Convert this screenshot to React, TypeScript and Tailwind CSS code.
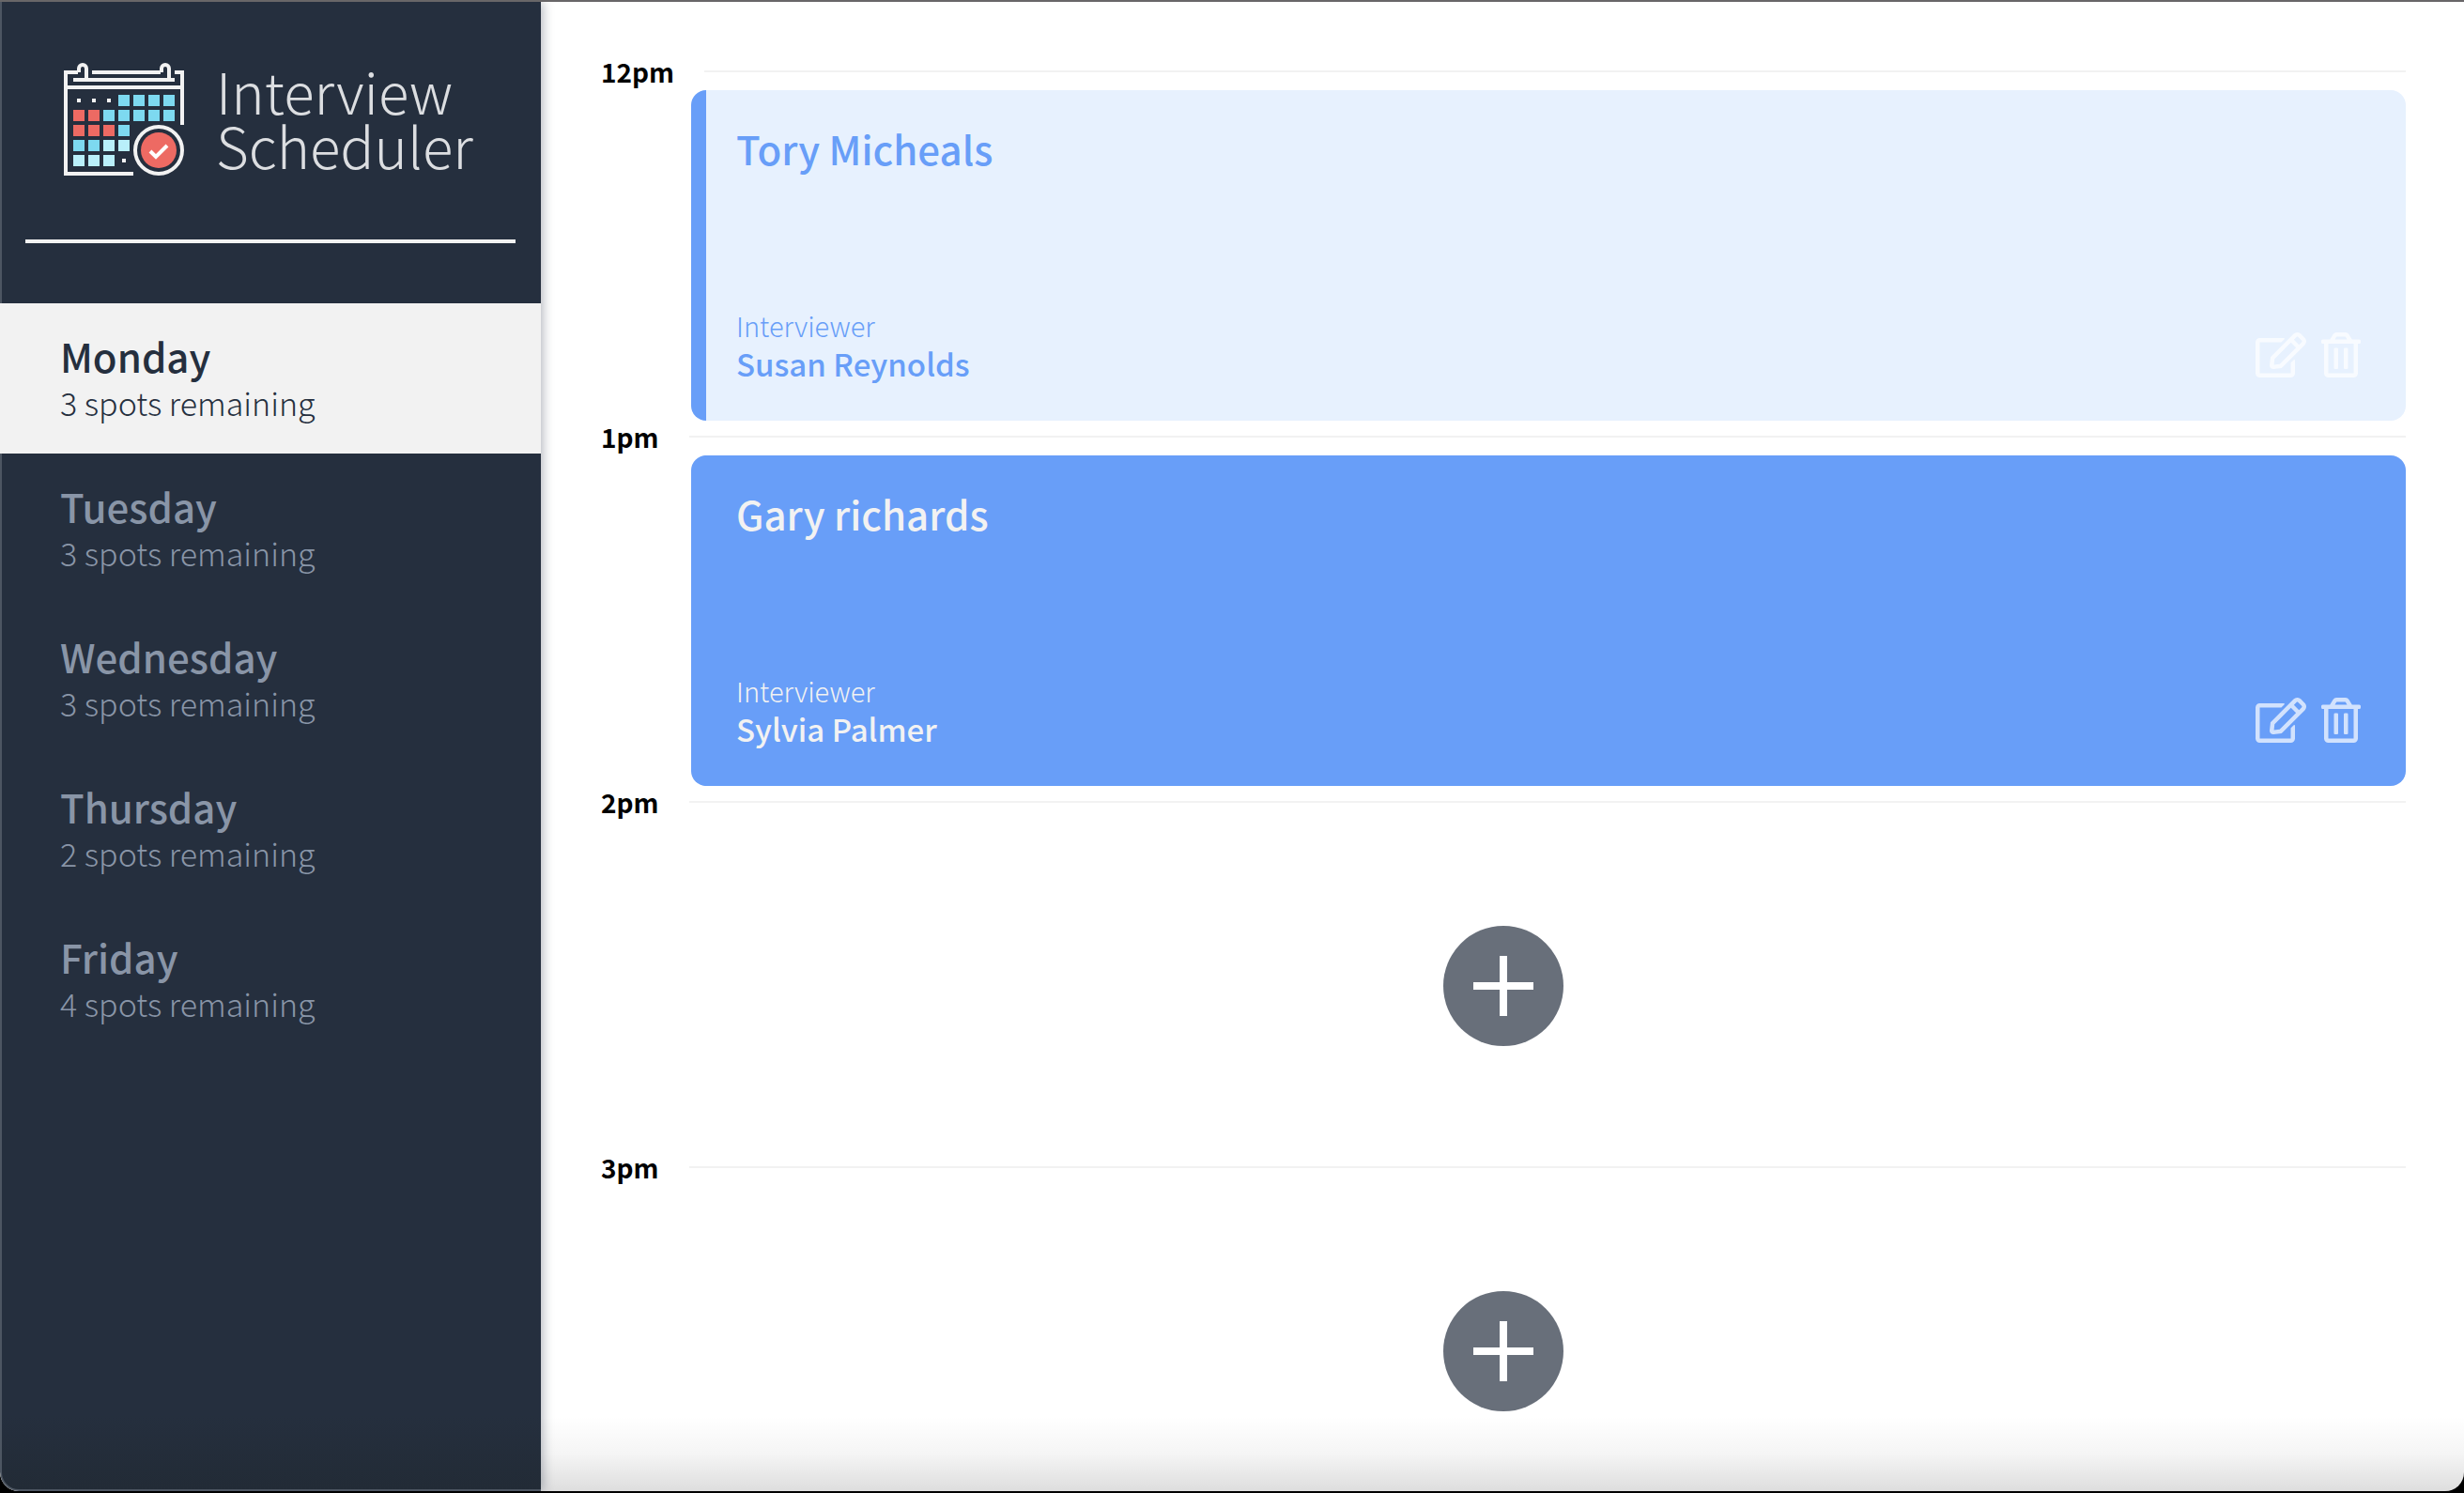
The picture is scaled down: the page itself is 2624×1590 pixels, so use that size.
import { useState } from "react";
import { FaRegEdit, FaRegTrashAlt } from "react-icons/fa";

const days = [
  { name: "Monday", spots: 3 },
  { name: "Tuesday", spots: 3 },
  { name: "Wednesday", spots: 3 },
  { name: "Thursday", spots: 2 },
  { name: "Friday", spots: 4 },
];

type Slot = { time: string; student?: string; interviewer?: string };

const slots: Slot[] = [
  { time: "12pm", student: "Tory Micheals", interviewer: "Susan Reynolds" },
  { time: "1pm", student: "Gary richards", interviewer: "Sylvia Palmer" },
  { time: "2pm" },
  { time: "3pm" },
];

const RED = "#ed6a63";
const BLUE = "#7dd9f0";
const PALE = "#b9effa";

const cells = [
  [null, null, null, BLUE, BLUE, BLUE, BLUE],
  [RED, RED, BLUE, BLUE, BLUE, BLUE, BLUE],
  [RED, RED, RED, BLUE],
  [BLUE, BLUE, PALE, PALE],
  [PALE, PALE, PALE, null],
];

function CalendarLogo() {
  return (
    <svg viewBox="0 0 128 120" className="h-[120px] w-32 shrink-0" fill="none" aria-hidden="true">
      <g stroke="#f2f2f2" strokeWidth="4">
        <path d="M15 10H2V118H74" />
        <path d="M30 10H103" />
        <path d="M118 10H126V66" />
        <path d="M10 18H118" />
        <path d="M2 26H126" />
        <path d="M16 10V6a4 4 0 0 1 8 0V17" />
        <path d="M104 10V6a4 4 0 0 1 8 0V17" />
        <circle cx="101" cy="93" r="25" />
      </g>
      {cells.map((row, r) =>
        row.map((fill, c) =>
          fill ? (
            <rect key={`${r}-${c}`} x={10 + c * 16} y={34 + r * 16} width="12" height="12" fill={fill} />
          ) : (
            <rect key={`${r}-${c}`} x={14 + c * 16} y={38 + r * 16} width="4" height="4" fill="#f2f2f2" />
          ),
        ),
      )}
      <circle cx="101" cy="93" r="19" fill={RED} />
      <path d="M92 94l6 6 12-12" stroke="#fff" strokeWidth="4" />
    </svg>
  );
}

function Sidebar() {
  const [selected, setSelected] = useState("Monday");
  return (
    <aside className="z-10 flex w-[576px] shrink-0 flex-col rounded-bl-[20px] border-b-2 border-l-2 border-[#4d5662] bg-gradient-to-b from-[#252f3e] from-95% to-[#222b36] shadow-[2px_0_12px_rgba(30,40,60,0.35)]">
      <h1 className="flex h-[253px] items-start gap-[34px] pt-[65px] pl-[66px] text-[60px] leading-[58px] font-extralight text-[#dcdee1]">
        <CalendarLogo />
        <span className="w-72">Interview Scheduler</span>
      </h1>
      <hr className="mr-[27px] mb-16 ml-[25px] h-1 border-0 bg-[#f2f2f2]" />
      <nav aria-label="Days" className="-ml-0.5">
        <ul>
          {days.map((day) => (
            <li key={day.name}>
              <button
                type="button"
                onClick={() => setSelected(day.name)}
                aria-pressed={day.name === selected}
                className={
                  day.name === selected
                    ? "flex h-40 w-full flex-col justify-center bg-[#f2f2f2] pl-16 text-left text-[#252f3e]"
                    : "flex h-40 w-full flex-col justify-center border-l-2 border-[#4d5662] pl-[62px] text-left text-[#8995a7]"
                }
              >
                <span className="text-[42px] leading-[52px] font-medium">{day.name}</span>
                <span className="text-[34px] leading-[48px] font-light">{day.spots} spots remaining</span>
              </button>
            </li>
          ))}
        </ul>
      </nav>
    </aside>
  );
}

function Appointment({ slot, past }: { slot: Slot; past: boolean }) {
  return (
    <article
      className={
        past
          ? "ml-24 flex h-[352px] flex-col justify-between rounded-2xl border-l-16 border-[#689ef8] bg-[#e7f1fe] pt-8 pr-12 pb-10 pl-8 text-[#689ef8]"
          : "ml-24 flex h-[352px] flex-col justify-between rounded-2xl border-l-16 border-[#689ef8] bg-[#689ef8] pt-8 pr-12 pb-10 pl-8 text-[#f2f2f2]"
      }
    >
      <h2 className="text-[42px] leading-[60px] font-medium">{slot.student}</h2>
      <div className="flex items-end justify-between">
        <div>
          <h3 className="text-[29px] leading-10 font-light">Interviewer</h3>
          <p className="text-[33px] leading-[42px] font-medium">{slot.interviewer}</p>
        </div>
        <div className="flex gap-4 pb-[6px] text-white/70">
          <button type="button" aria-label="Edit">
            <FaRegEdit className="h-12 w-[54px]" />
          </button>
          <button type="button" aria-label="Delete">
            <FaRegTrashAlt className="h-12 w-[42px]" />
          </button>
        </div>
      </div>
    </article>
  );
}

function AddButton({ time }: { time: string }) {
  return (
    <div className="flex h-[352px] items-center justify-center">
      <button
        type="button"
        aria-label={`Add appointment at ${time}`}
        className="flex size-32 items-center justify-center rounded-full bg-[#686f7a]"
      >
        <svg viewBox="0 0 64 64" className="size-16" aria-hidden="true">
          <path d="M32 0V64M0 32H64" stroke="#fff" strokeWidth="8" />
        </svg>
      </button>
    </div>
  );
}

export default function App() {
  return (
    <div className="h-screen bg-black pb-0.5 font-['Noto_Sans_CJK_SC',sans-serif]">
      <div className="relative flex h-full overflow-hidden rounded-b-[20px] border-t-2 border-[#686668] bg-white">
        <Sidebar />
        <main className="min-w-0 flex-1 overflow-y-auto pt-[57px] pr-[62px] pl-16 [scrollbar-width:none]">
          {slots.map((slot, i) => (
            <section key={slot.time}>
              <header className="flex h-[37px] items-center gap-8 pb-1">
                <h4 className="text-[28px] leading-8 font-bold text-black">{slot.time}</h4>
                <hr className="h-0.5 flex-1 border-0 bg-[#f2f2f2]" />
              </header>
              {slot.student ? <Appointment slot={slot} past={i === 0} /> : <AddButton time={slot.time} />}
            </section>
          ))}
        </main>
        <div className="pointer-events-none absolute right-0 bottom-0 left-[576px] h-20 bg-gradient-to-b from-black/0 via-black/4 to-black/13" />
      </div>
    </div>
  );
}
